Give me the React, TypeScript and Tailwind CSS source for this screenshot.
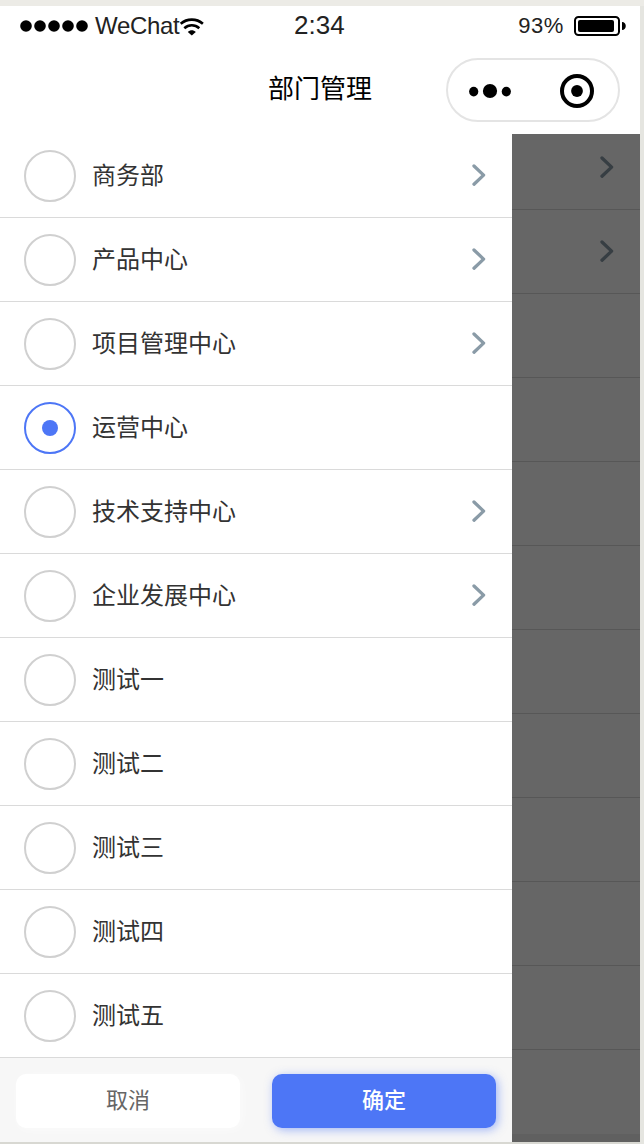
const departments = [
  { name: '商务部', hasChildren: true },
  { name: '产品中心', hasChildren: true },
  { name: '项目管理中心', hasChildren: true },
  { name: '运营中心', hasChildren: false },
  { name: '技术支持中心', hasChildren: true },
  { name: '企业发展中心', hasChildren: true },
  { name: '测试一', hasChildren: false },
  { name: '测试二', hasChildren: false },
  { name: '测试三', hasChildren: false },
  { name: '测试四', hasChildren: false },
  { name: '测试五', hasChildren: false },
] as const;

const selectedName = '运营中心';

function Chevron({ className }: { className: string }) {
  return (
    <svg className={className} width="14" height="22" viewBox="0 0 14 22" fill="none">
      <path d="M2 2l9.6 9.1L2 20.2" stroke="currentColor" strokeWidth="3.3" strokeLinecap="round" strokeLinejoin="round" />
    </svg>
  );
}

function StatusBar() {
  return (
    <div className="flex h-10 items-center pl-5 pr-[13px] text-[#222]">
      <div className="flex w-[274px] items-center">
        <svg className="mb-px" width="69" height="12" viewBox="0 0 69 12" fill="#000">
          <circle cx="6" cy="6" r="5.8" />
          <circle cx="20" cy="6" r="5.8" />
          <circle cx="34" cy="6" r="5.8" />
          <circle cx="48" cy="6" r="5.8" />
          <circle cx="62" cy="6" r="5.8" />
        </svg>
        <span className="ml-[6px] w-[84px] text-[24px] leading-10 tracking-[-0.3px]">WeChat</span>
        <svg className="mt-[2px]" width="26" height="20" viewBox="0 0 26 20" fill="none" stroke="#000">
          <path d="M1.7 6.7C8 1.2 17.6 1.2 23.9 6.7" strokeWidth="2.6" />
          <path d="M5.3 11.2C9.7 7.3 15.9 7.3 20.3 11.2" strokeWidth="2.6" />
          <path d="M12.8 18.6l-4-3.7c2.3-2.1 5.7-2.1 8 0z" fill="#000" stroke="none" />
        </svg>
      </div>
      <span className="pb-[2px] text-[26px] leading-[38px]">2:34</span>
      <div className="ml-auto flex items-center">
        <span className="text-[22px] leading-10 tracking-[0.6px]">93%</span>
        <svg className="ml-[10px]" width="53" height="20" viewBox="0 0 53 20" fill="#000">
          <rect x="1" y="1" width="44" height="18" rx="3.5" fill="none" stroke="#000" strokeWidth="2" />
          <rect x="4" y="4" width="36" height="12" rx="2" />
          <path d="M48 6c5 0 5 8 0 8z" />
        </svg>
      </div>
    </div>
  );
}

function NavBar() {
  return (
    <div className="grid h-[88px] grid-cols-[1fr_auto_1fr] items-start">
      <span />
      <h1 className="pt-[23px] text-[26px] leading-[40px] text-black">部门管理</h1>
      <div className="mr-5 mt-3 flex h-16 w-[174px] items-center justify-self-end rounded-full border-2 border-[#e4e4e4] pl-[21px]">
        <svg className="mt-[2px]" width="44" height="16" viewBox="0 0 44 16">
          <ellipse cx="4.7" cy="8.6" rx="4.6" ry="4.9" />
          <circle cx="21" cy="8" r="7.1" />
          <ellipse cx="37.3" cy="8.6" rx="4.6" ry="4.9" />
        </svg>
        <svg className="ml-[47px] mt-[2px]" width="34" height="34" viewBox="0 0 34 34">
          <circle cx="17" cy="17" r="15" fill="none" stroke="#000" strokeWidth="4" />
          <circle cx="17" cy="17" r="5.9" />
        </svg>
      </div>
    </div>
  );
}

function Drawer() {
  return (
    <aside className="flex w-[512px] flex-col bg-white">
      <ul>
        {departments.map((dept) => {
          const selected = dept.name === selectedName;
          return (
            <li key={dept.name} className="flex h-[84px] items-center border-b border-[#dadada] pl-6 pr-[26px]">
              <span
                className={`mt-px flex size-[52px] items-center justify-center rounded-full border-2 ${
                  selected ? 'border-[#4d76f6]' : 'border-[#d0d0d0]'
                }`}
              >
                {selected ? <span className="size-4 rounded-full bg-[#4d76f6]" /> : null}
              </span>
              <span className="ml-4 text-[24px] leading-8 text-[#333]">{dept.name}</span>
              {dept.hasChildren ? <Chevron className="mb-px ml-auto text-[#8a9ba7]" /> : null}
            </li>
          );
        })}
      </ul>
      <div className="flex h-[84px] gap-8 bg-[#f7f7f7] px-4 pt-4">
        <button
          type="button"
          className="h-[54px] flex-1 rounded-[10px] bg-white pb-px text-[22px] text-[#666] shadow-[2px_2px_10px_rgba(255,255,255,0.5)]"
        >
          取消
        </button>
        <button
          type="button"
          className="h-[54px] flex-1 rounded-[10px] bg-[#4d76f6] pb-px text-[22px] font-medium text-white shadow-[2px_2px_10px_rgba(77,118,246,0.5)]"
        >
          确定
        </button>
      </div>
    </aside>
  );
}

// The page underneath, dimmed by the drawer's overlay
function DimmedList() {
  return (
    <div className="flex-1 bg-[#606060]">
      {Array.from({ length: 12 }, (_, i) => (
        <div
          key={i}
          className={`flex items-center justify-end border-b border-[#575757] bg-[#666] pr-[26px] last:border-b-0 ${
            i === 0 ? 'h-[76px] pb-[9px]' : 'h-[84px] pb-px'
          }`}
        >
          {i < 2 ? <Chevron className="text-[#373e43]" /> : null}
        </div>
      ))}
    </div>
  );
}

export default function App() {
  return (
    <div className="h-[1144px] w-[644px] overflow-hidden bg-[#e5e5e0] font-['Liberation_Sans','Noto_Sans_CJK_SC',sans-serif]">
      <div className="h-[6px] bg-[#ecebe6]" />
      <div className="h-[1136px] w-[640px] overflow-hidden bg-white">
        <StatusBar />
        <NavBar />
        <div className="flex h-[1008px] overflow-hidden">
          <Drawer />
          <DimmedList />
        </div>
      </div>
      <div className="h-[2px] w-[640px] bg-[#d8d8d2]" />
    </div>
  );
}
